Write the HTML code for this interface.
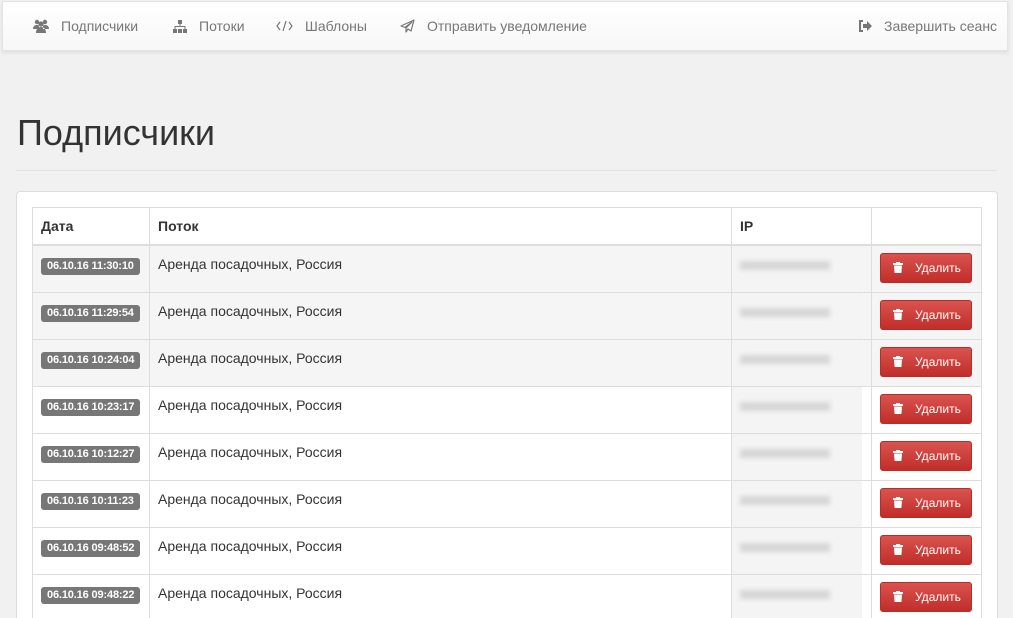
<!DOCTYPE html>
<html><head><meta charset="utf-8">
<style>
*{box-sizing:border-box;margin:0;padding:0}
html,body{width:1013px;height:618px;overflow:hidden}
body{background:#f1f1f1;font-family:"Liberation Sans",sans-serif;color:#333;font-size:14px;position:relative}
.nav{position:absolute;left:2px;top:1px;width:1006px;height:50px;background:linear-gradient(#fff,#f7f7f7);border:1px solid #e4e4e4;box-shadow:0 2px 4px rgba(0,0,0,.08)}
.nav .it{position:absolute;top:16px;color:#777;font-size:14px;display:flex;align-items:center}
.nav svg{margin-right:12px}
h1{position:absolute;left:17px;top:112px;font-weight:normal;font-size:36px;color:#333}
.hr{position:absolute;left:16px;top:170px;width:981px;border-top:1px solid #e2e2e2}
.panel{position:absolute;left:16px;top:191px;width:982px;height:440px;background:#fff;border:1px solid #ddd;border-radius:4px}
table{position:absolute;left:32px;top:207px;width:950px;border-collapse:collapse}
td,th{border:1px solid #ddd;text-align:left;vertical-align:top;padding:0 8px}
th{height:37px;font-weight:bold;border-bottom:2px solid #ddd;padding-top:10px;font-size:14px}
td{height:47px;padding-top:10px}
tr.g td{background:#f5f5f5}
.lbl{display:inline-block;white-space:nowrap;background:#777;color:#fff;font-size:11px;font-weight:bold;padding:2px 6px 3px;border-radius:3px;margin-top:2px;letter-spacing:-0.15px}
.ip{display:block;width:90px;height:9px;background:#d6d6d6;filter:blur(2.5px)}
.ipc{padding:0}
.ipbox{margin:0;width:130px;height:46px;background:#f4f4f4;padding:15px 8px 0;overflow:hidden}
.btn{display:inline-flex;align-items:center;margin-top:-1px;background:linear-gradient(#d9534f,#c12e2a);border:1px solid #b92c28;color:#fff;border-radius:3px;width:92px;height:30px;font-size:12px;padding-left:12px}
.btn svg{margin-right:12px}
</style></head><body>
<div class="nav">
<div class="it" style="left:30px"><svg width="16" height="14" viewBox="0 0 16 14"><circle cx="4" cy="3" r="2.2" fill="#777"/><circle cx="12" cy="3" r="2.2" fill="#777"/><circle cx="8" cy="5" r="2.6" fill="#777"/><path d="M0 10c0-3 2-4 4-4s2 1 2 1v3z M16 10c0-3-2-4-4-4s-2 1-2 1v3z M3 14c0-4 2-6 5-6s5 2 5 6z" fill="#777"/></svg>Подписчики</div>
<div class="it" style="left:170px"><svg width="14" height="13" viewBox="0 0 14 13"><rect x="5" y="0" width="4" height="4" fill="#777"/><rect x="6.5" y="4" width="1" height="3" fill="#777"/><rect x="1.5" y="6" width="11" height="1" fill="#777"/><rect x="1.5" y="6" width="1" height="3" fill="#777"/><rect x="11.5" y="6" width="1" height="3" fill="#777"/><rect x="0" y="9" width="4" height="4" fill="#777"/><rect x="5" y="9" width="4" height="4" fill="#777"/><rect x="10" y="9" width="4" height="4" fill="#777"/></svg>Потоки</div>
<div class="it" style="left:273px"><svg width="17" height="12" viewBox="0 0 17 12"><path d="M4 2L1 6l3 4M13 2l3 4-3 4M10 1L7 11" stroke="#777" stroke-width="1.2" fill="none"/></svg>Шаблоны</div>
<div class="it" style="left:397px"><svg width="15" height="14" viewBox="0 0 15 14"><path d="M14 1L1 7l4 1.5L12 3 6 9v4l2-3 3 2z" fill="none" stroke="#777" stroke-width="1.2" stroke-linejoin="round"/></svg>Отправить уведомление</div>
<div class="it" style="left:855px"><svg width="14" height="12" viewBox="0 0 14 12"><path d="M5 1H2v10h3" stroke="#777" stroke-width="2" fill="none"/><path d="M5 4h4V1l5 5-5 5V8H5z" fill="#777"/></svg>Завершить сеанс</div>
</div>
<h1>Подписчики</h1>
<div class="hr"></div>
<div class="panel"></div>
<table>
<tr><th style="width:117px">Дата</th><th style="width:582px">Поток</th><th style="width:140px">IP</th><th></th></tr>
<tr class="g"><td><span class="lbl">06.10.16 11:30:10</span></td><td>Аренда посадочных, Россия</td><td class="ipc"><div class="ipbox"><span class="ip"></span></div></td><td style="padding-top:8px"><span class="btn"><svg width="10" height="11" viewBox="0 0 10 11"><rect x="0" y="1" width="10" height="2" fill="#fff"/><rect x="3" y="0" width="4" height="1.5" fill="#fff"/><path d="M1 3.5h8l-.6 7.5H1.6z" fill="#fff"/></svg>Удалить</span></td></tr>
<tr class="g"><td><span class="lbl">06.10.16 11:29:54</span></td><td>Аренда посадочных, Россия</td><td class="ipc"><div class="ipbox"><span class="ip"></span></div></td><td style="padding-top:8px"><span class="btn"><svg width="10" height="11" viewBox="0 0 10 11"><rect x="0" y="1" width="10" height="2" fill="#fff"/><rect x="3" y="0" width="4" height="1.5" fill="#fff"/><path d="M1 3.5h8l-.6 7.5H1.6z" fill="#fff"/></svg>Удалить</span></td></tr>
<tr class="g"><td><span class="lbl">06.10.16 10:24:04</span></td><td>Аренда посадочных, Россия</td><td class="ipc"><div class="ipbox"><span class="ip"></span></div></td><td style="padding-top:8px"><span class="btn"><svg width="10" height="11" viewBox="0 0 10 11"><rect x="0" y="1" width="10" height="2" fill="#fff"/><rect x="3" y="0" width="4" height="1.5" fill="#fff"/><path d="M1 3.5h8l-.6 7.5H1.6z" fill="#fff"/></svg>Удалить</span></td></tr>
<tr><td><span class="lbl">06.10.16 10:23:17</span></td><td>Аренда посадочных, Россия</td><td class="ipc"><div class="ipbox"><span class="ip"></span></div></td><td style="padding-top:8px"><span class="btn"><svg width="10" height="11" viewBox="0 0 10 11"><rect x="0" y="1" width="10" height="2" fill="#fff"/><rect x="3" y="0" width="4" height="1.5" fill="#fff"/><path d="M1 3.5h8l-.6 7.5H1.6z" fill="#fff"/></svg>Удалить</span></td></tr>
<tr><td><span class="lbl">06.10.16 10:12:27</span></td><td>Аренда посадочных, Россия</td><td class="ipc"><div class="ipbox"><span class="ip"></span></div></td><td style="padding-top:8px"><span class="btn"><svg width="10" height="11" viewBox="0 0 10 11"><rect x="0" y="1" width="10" height="2" fill="#fff"/><rect x="3" y="0" width="4" height="1.5" fill="#fff"/><path d="M1 3.5h8l-.6 7.5H1.6z" fill="#fff"/></svg>Удалить</span></td></tr>
<tr><td><span class="lbl">06.10.16 10:11:23</span></td><td>Аренда посадочных, Россия</td><td class="ipc"><div class="ipbox"><span class="ip"></span></div></td><td style="padding-top:8px"><span class="btn"><svg width="10" height="11" viewBox="0 0 10 11"><rect x="0" y="1" width="10" height="2" fill="#fff"/><rect x="3" y="0" width="4" height="1.5" fill="#fff"/><path d="M1 3.5h8l-.6 7.5H1.6z" fill="#fff"/></svg>Удалить</span></td></tr>
<tr><td><span class="lbl">06.10.16 09:48:52</span></td><td>Аренда посадочных, Россия</td><td class="ipc"><div class="ipbox"><span class="ip"></span></div></td><td style="padding-top:8px"><span class="btn"><svg width="10" height="11" viewBox="0 0 10 11"><rect x="0" y="1" width="10" height="2" fill="#fff"/><rect x="3" y="0" width="4" height="1.5" fill="#fff"/><path d="M1 3.5h8l-.6 7.5H1.6z" fill="#fff"/></svg>Удалить</span></td></tr>
<tr><td><span class="lbl">06.10.16 09:48:22</span></td><td>Аренда посадочных, Россия</td><td class="ipc"><div class="ipbox"><span class="ip"></span></div></td><td style="padding-top:8px"><span class="btn"><svg width="10" height="11" viewBox="0 0 10 11"><rect x="0" y="1" width="10" height="2" fill="#fff"/><rect x="3" y="0" width="4" height="1.5" fill="#fff"/><path d="M1 3.5h8l-.6 7.5H1.6z" fill="#fff"/></svg>Удалить</span></td></tr>
</table>
</body></html>
